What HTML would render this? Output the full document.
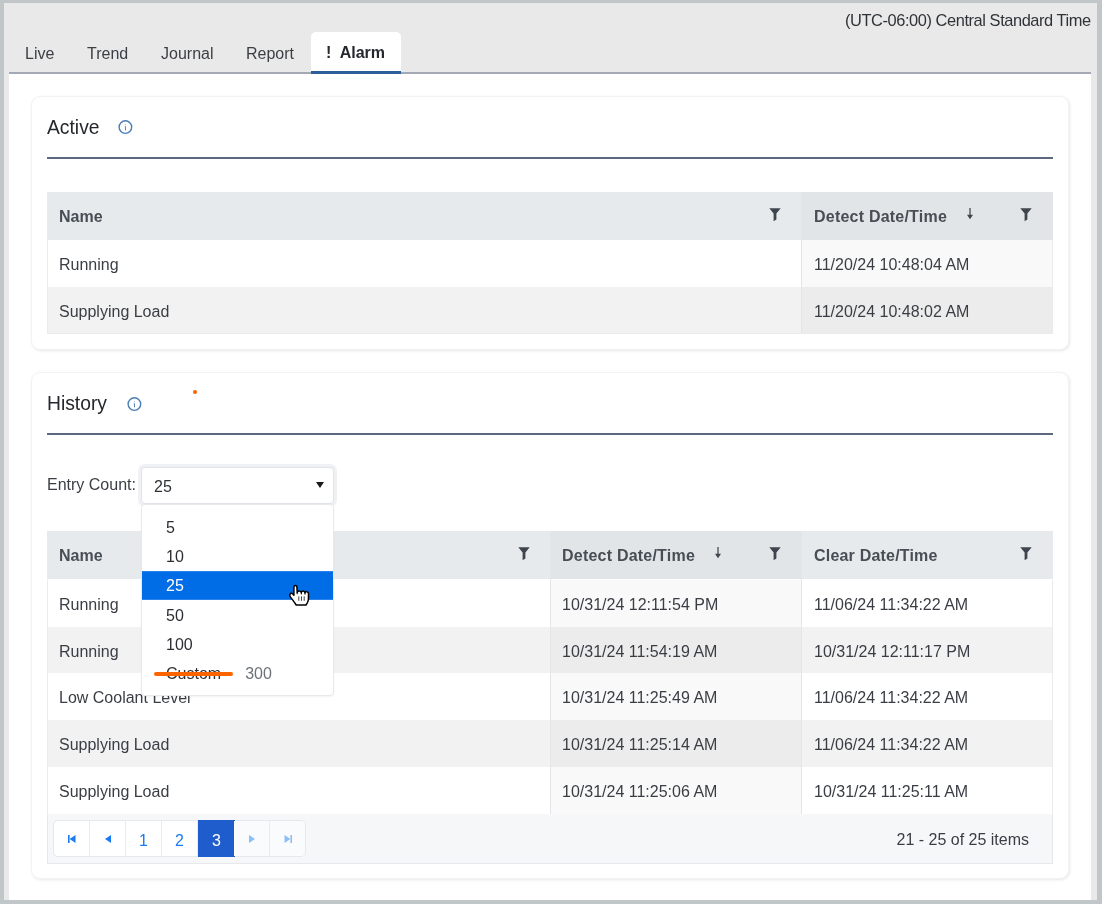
<!DOCTYPE html>
<html><head><meta charset="utf-8">
<style>
*{box-sizing:border-box;margin:0;padding:0}
html,body{width:1102px;height:904px;overflow:hidden;background:#c1c6c9;font-family:"Liberation Sans",sans-serif;color:#3d4248}
.abs{position:absolute}
#frame{position:absolute;left:4px;top:3px;width:1093px;height:897px;background:#e9e9e9}
#content{position:absolute;left:9px;top:73px;width:1082px;height:827px;background:#fff}
#tabline{position:absolute;left:9px;top:72px;width:1082px;height:2px;background:#a3aab5}
.tab{position:absolute;top:45px;font-size:16px;line-height:18px;color:#3b3f44;white-space:nowrap}
#atab{position:absolute;left:311px;top:32px;width:90px;height:40px;background:#fff;border-radius:5px 5px 0 0}
#ablue{position:absolute;left:311px;top:71px;width:90px;height:2.5px;background:#2c609a}
#atab span{position:absolute;left:15px;top:12px;font-size:16px;line-height:18px;font-weight:bold;color:#25292e;white-space:nowrap}
#tz{position:absolute;right:11px;top:11px;font-size:16.4px;letter-spacing:-0.42px;line-height:18px;color:#2f3338;white-space:nowrap}
.card{position:absolute;left:31px;width:1038px;background:#fff;border:1px solid #f1f2f4;border-radius:9px;box-shadow:1px 1px 3px rgba(20,30,50,0.10)}
.title{position:absolute;font-size:19.3px;line-height:22px;color:#24282d;white-space:nowrap}
.uline{position:absolute;left:47px;width:1006px;height:2px;background:#5b687d}
.tbl{position:absolute;left:47px;width:1006px}
.hdr{position:absolute;left:0;top:0;width:1006px;height:48px;background:#e7eaed}
.hcell{position:absolute;top:0;height:48px}
.htext{position:absolute;top:16px;font-size:16px;line-height:18px;font-weight:bold;color:#484e55;white-space:nowrap}
.row{position:absolute;left:0;width:1006px;height:47px}
.cell{position:absolute;top:0;height:47px}
.ctext{position:absolute;top:16px;font-size:16px;line-height:18px;color:#3a3e44;white-space:nowrap}
.vdiv{position:absolute;top:0;width:1px;background:#e3e5e8}
svg{position:absolute;overflow:visible}
body>div,body>svg,.tbl>*,.hdr>*,.row>*{will-change:transform}
#pager{position:absolute;left:0;top:283px;width:1006px;height:50px;background:#f6f7f9;border:1px solid #e6e8eb;border-top:none}
#pbtns{position:absolute;left:5px;top:6px;width:253px;height:37px;background:#fff;border:1px solid #e6e8eb;border-radius:5px}
.pb{position:absolute;top:0;width:36px;height:35px;border-right:1px solid #e9ebee}
.pt{font-size:16px;line-height:39px;text-align:center;color:#1a7bf2}
.act{background:#1f5dcc;color:#fff;top:-1px;height:37px;width:37px;line-height:41px;border-right:none}
.dis{background:#fafbfc}
#pinfo{position:absolute;right:23px;top:17px;font-size:16px;line-height:18px;color:#3a3e44;white-space:nowrap}
#sel{position:absolute;left:141px;top:467px;width:193px;height:37px;background:#fff;border:1px solid #e0e3e8;border-radius:4px;box-shadow:0 0 0 3px #eff1f4}
#sel span{position:absolute;left:12px;top:10px;font-size:16px;line-height:18px;color:#2f3338}
#dd{position:absolute;left:141px;top:504px;width:193px;height:192px;background:#fff;border:1px solid #e9e9ea;border-radius:4px;box-shadow:0 1px 2px rgba(0,0,0,0.05)}
.opt{position:absolute;left:0;width:191px;height:29px;font-size:16px;line-height:29px;padding-left:24px;color:#2b2f33;white-space:nowrap}
.hl{background:#006de6;color:#fff;box-shadow:inset 0 1px 0 #2a83ec,inset 0 -1px 0 #2a83ec}

</style></head><body>
<div id="frame"></div>
<div id="content"></div>
<div id="tabline"></div>
<div id="tz">(UTC-06:00) Central Standard Time</div>
<div class="tab" style="left:25px">Live</div>
<div class="tab" style="left:87px">Trend</div>
<div class="tab" style="left:161px">Journal</div>
<div class="tab" style="left:246px">Report</div>
<div id="atab"><span>!&nbsp; Alarm</span></div>
<div id="ablue"></div>

<!-- ACTIVE CARD -->
<div class="card" style="top:96px;height:254px"></div>
<div class="title" style="left:47px;top:117px">Active</div>
<svg style="left:118px;top:120px" width="14" height="14" viewBox="0 0 14 14"><circle cx="7.4" cy="7.1" r="6.3" fill="none" stroke="#4a7db7" stroke-width="1.4"/><circle cx="7.4" cy="4.6" r="0.55" fill="#4076b4" opacity="0.6"/><rect x="6.95" y="6.1" width="0.9" height="4.4" rx="0.45" fill="#3a70b0"/></svg>
<div class="uline" style="top:157px"></div>

<div class="tbl" style="top:192px;height:142px">
  <div class="hdr">
    <div class="hcell" style="left:754px;width:252px;background:#e2e5e8"></div>
    <div class="htext" style="left:12px">Name</div>
    <svg style="left:722px;top:16px" width="12" height="14" viewBox="0 0 12 14"><path d="M0.3 0.3H11.7L7.4 5.6V11.6L4.6 13.3V5.6Z" fill="#3f454d"/></svg>
    <div class="htext" style="left:767px;letter-spacing:0.22px">Detect Date/Time</div>
    <svg style="left:919px;top:16px" width="8" height="11" viewBox="0 0 8 11"><path d="M4 0V7.4" stroke="#3f454d" stroke-width="1.25"/><path d="M1 6.8H7L4 11.2Z" fill="#3f454d"/></svg>
    <svg style="left:973px;top:16px" width="12" height="14" viewBox="0 0 12 14"><path d="M0.3 0.3H11.7L7.4 5.6V11.6L4.6 13.3V5.6Z" fill="#3f454d"/></svg>
  </div>
  <div class="row" style="top:48px;height:47px;background:#fff">
    <div class="cell" style="left:754px;width:252px;height:47px;background:#f9f9f9"></div>
    <div class="ctext" style="left:12px">Running</div>
    <div class="ctext" style="left:767px">11/20/24 10:48:04 AM</div>
  </div>
  <div class="row" style="top:95px;background:#f2f2f2">
    <div class="cell" style="left:754px;width:252px;background:#ececec"></div>
    <div class="ctext" style="left:12px">Supplying Load</div>
    <div class="ctext" style="left:767px">11/20/24 10:48:02 AM</div>
  </div>
  <div class="vdiv" style="left:754px;top:0;height:142px"></div>
  <div class="abs" style="left:0;top:48px;width:1006px;height:94px;border:1px solid #ebebeb;border-top:none"></div>
</div>

<!-- HISTORY CARD -->
<div class="card" style="top:372px;height:507px"></div>
<div class="title" style="left:47px;top:393px">History</div>
<svg style="left:127px;top:397px" width="14" height="14" viewBox="0 0 14 14"><circle cx="7.4" cy="7.1" r="6.3" fill="none" stroke="#4a7db7" stroke-width="1.4"/><circle cx="7.4" cy="4.6" r="0.55" fill="#4076b4" opacity="0.6"/><rect x="6.95" y="6.1" width="0.9" height="4.4" rx="0.45" fill="#3a70b0"/></svg>
<div class="uline" style="top:433px"></div>
<div class="tbl" style="top:531px;height:333px">
  <div class="hdr">
    <div class="hcell" style="left:503px;width:251px;background:#e2e5e8"></div>
    <div class="htext" style="left:12px">Name</div>
    <svg style="left:471px;top:16px" width="12" height="14" viewBox="0 0 12 14"><path d="M0.3 0.3H11.7L7.4 5.6V11.6L4.6 13.3V5.6Z" fill="#3f454d"/></svg>
    <div class="htext" style="left:515px;letter-spacing:0.22px">Detect Date/Time</div>
    <svg style="left:667px;top:16px" width="8" height="11" viewBox="0 0 8 11"><path d="M4 0V7.4" stroke="#3f454d" stroke-width="1.25"/><path d="M1 6.8H7L4 11.2Z" fill="#3f454d"/></svg>
    <svg style="left:722px;top:16px" width="12" height="14" viewBox="0 0 12 14"><path d="M0.3 0.3H11.7L7.4 5.6V11.6L4.6 13.3V5.6Z" fill="#3f454d"/></svg>
    <div class="htext" style="left:767px;letter-spacing:0.2px">Clear Date/Time</div>
    <svg style="left:973px;top:16px" width="12" height="14" viewBox="0 0 12 14"><path d="M0.3 0.3H11.7L7.4 5.6V11.6L4.6 13.3V5.6Z" fill="#3f454d"/></svg>
  </div>
  <div class="row" style="top:49px;height:47px;background:#fff">
    <div class="cell" style="left:503px;width:251px;height:47px;background:#f9f9f9"></div>
    <div class="ctext" style="left:12px">Running</div>
    <div class="ctext" style="left:515px">10/31/24 12:11:54 PM</div>
    <div class="ctext" style="left:767px">11/06/24 11:34:22 AM</div>
  </div>
  <div class="row" style="top:96px;height:46px;background:#f2f2f2">
    <div class="cell" style="left:503px;width:251px;height:46px;background:#ececec"></div>
    <div class="ctext" style="left:12px">Running</div>
    <div class="ctext" style="left:515px">10/31/24 11:54:19 AM</div>
    <div class="ctext" style="left:767px">10/31/24 12:11:17 PM</div>
  </div>
  <div class="row" style="top:142px;height:47px;background:#fff">
    <div class="cell" style="left:503px;width:251px;height:47px;background:#f9f9f9"></div>
    <div class="ctext" style="left:12px">Low Coolant Level</div>
    <div class="ctext" style="left:515px">10/31/24 11:25:49 AM</div>
    <div class="ctext" style="left:767px">11/06/24 11:34:22 AM</div>
  </div>
  <div class="row" style="top:189px;height:47px;background:#f2f2f2">
    <div class="cell" style="left:503px;width:251px;height:47px;background:#ececec"></div>
    <div class="ctext" style="left:12px">Supplying Load</div>
    <div class="ctext" style="left:515px">10/31/24 11:25:14 AM</div>
    <div class="ctext" style="left:767px">11/06/24 11:34:22 AM</div>
  </div>
  <div class="row" style="top:236px;height:47px;background:#fff">
    <div class="cell" style="left:503px;width:251px;height:47px;background:#f9f9f9"></div>
    <div class="ctext" style="left:12px">Supplying Load</div>
    <div class="ctext" style="left:515px">10/31/24 11:25:06 AM</div>
    <div class="ctext" style="left:767px">10/31/24 11:25:11 AM</div>
  </div>
  <div class="vdiv" style="left:503px;top:0;height:283px"></div>
  <div class="vdiv" style="left:754px;top:0;height:283px"></div>
  <div class="abs" style="left:0;top:49px;width:1006px;height:234px;border:1px solid #ebebeb;border-top:none;border-bottom:none"></div>
  <div id="pager">
    <div id="pbtns">
      <div class="pb" style="left:0"><svg style="left:14px;top:14px" width="8" height="8" viewBox="0 0 8 8"><rect x="0" y="0" width="1.6" height="8" fill="#1a7bf2"/><path d="M7.5 0V8L1.6 4Z" fill="#1a7bf2"/></svg></div>
      <div class="pb" style="left:36px"><svg style="left:15px;top:14px" width="7" height="8" viewBox="0 0 7 8"><path d="M6 0V8L0 4Z" fill="#1a7bf2"/></svg></div>
      <div class="pb pt" style="left:72px">1</div>
      <div class="pb pt" style="left:108px">2</div>
      <div class="pb pt act" style="left:144px">3</div>
      <div class="pb dis" style="left:180px"><svg style="left:15px;top:14px" width="7" height="8" viewBox="0 0 7 8"><path d="M0 0V8L6 4Z" fill="#8dbef5"/></svg></div>
      <div class="pb dis" style="left:216px;width:35px;border-right:none;border-radius:0 4px 4px 0"><svg style="left:14px;top:14px" width="8" height="8" viewBox="0 0 8 8"><path d="M0.5 0V8L6.4 4Z" fill="#8dbef5"/><rect x="6.4" y="0" width="1.6" height="8" fill="#8dbef5"/></svg></div>
    </div>
    <div id="pinfo">21 - 25 of 25 items</div>
  </div>
</div>

<!-- Entry count -->
<div class="ctext" style="left:47px;top:476px">Entry Count:</div>
<div id="sel"><span>25</span><svg style="left:174px;top:14px" width="8" height="6" viewBox="0 0 8 6"><path d="M0 0H8L4 6Z" fill="#1b1b1b"/></svg></div>
<div id="dd">
  <div class="opt" style="top:8px">5</div>
  <div class="opt" style="top:37px">10</div>
  <div class="opt hl" style="top:66px">25</div>
  <div class="opt" style="top:96px">50</div>
  <div class="opt" style="top:125px">100</div>
  <div class="opt" style="top:154px">Custom<span style="margin-left:24px;color:#6d7278">300</span></div>
</div>
<div class="abs" style="left:154px;top:672px;width:79px;height:3.6px;border-radius:2px;background:#fc6400"></div>
<div class="abs" style="left:193px;top:390px;width:4px;height:4px;border-radius:2px;background:#fc6000"></div>
<svg style="left:286px;top:582px" width="26" height="26" viewBox="0 0 26 26"><path d="M7.9 13.2L7.9 5C7.9 3.1 10.9 3.1 10.9 5L11.2 10.6C11.5 8.5 15.1 8.3 15.3 10.8C15.5 8.3 18.8 8.3 19 11C19.2 8.9 22.5 9.2 22.5 11.8L22.4 17.8C22.3 19.8 21 21.6 20 23L10.2 23C8.5 20.3 6.2 17.5 4.2 14.6C3.4 13.5 3.8 11.4 5.3 11.2C6.3 11.1 7.2 12.2 7.9 13.2Z" fill="#fff" stroke="#000" stroke-width="1.5" stroke-linejoin="round"/><path d="M11.2 10.6V12.2M15.3 10.8V12.4M19 11V12.6" stroke="#000" stroke-width="1"/><path d="M12.8 14.3V18.8M15.5 14.3V18.8M18.2 14.3V18.8" stroke="#333" stroke-width="0.9"/></svg>
</body></html>
